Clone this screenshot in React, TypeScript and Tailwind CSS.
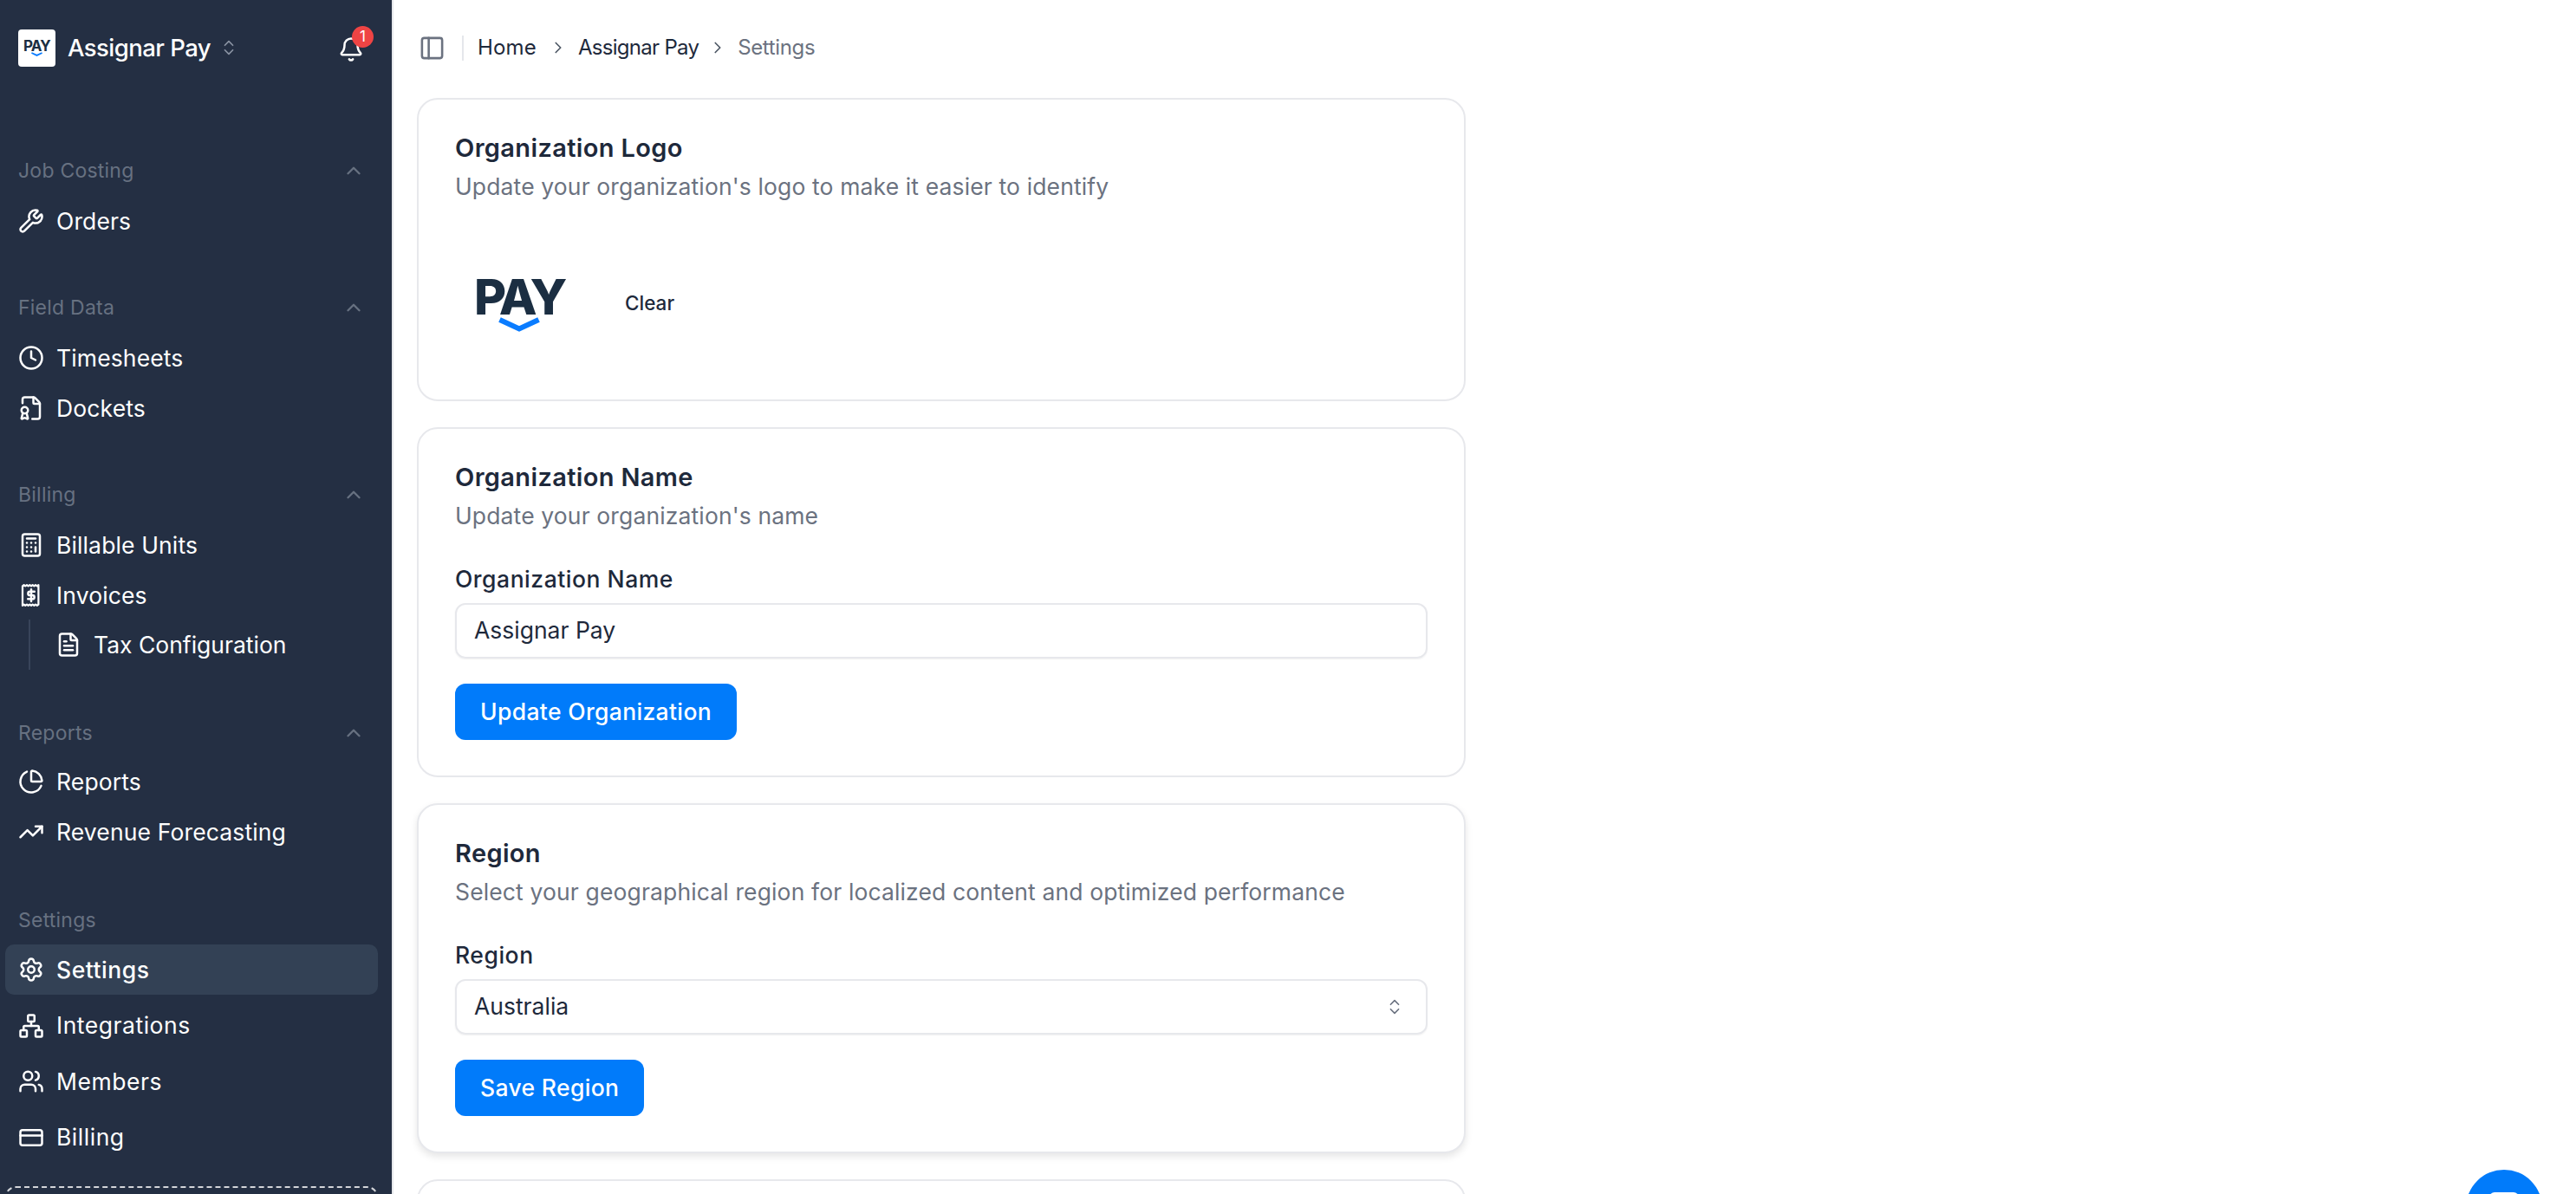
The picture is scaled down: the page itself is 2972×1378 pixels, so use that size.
import {
  Bell,
  Calculator,
  ChevronRight,
  ChevronsUpDown,
  ChevronUp,
  ChartPie,
  Clock,
  CreditCard,
  FileBadge,
  FileText,
  Network,
  PanelLeft,
  Settings,
  TrendingUp,
  Users,
  Wrench,
} from "lucide-react";

const PayMark = ({ big }: { big?: boolean }) => {
  if (big) {
    return (
      <div className="flex flex-col items-center">
        <span className="[font-family:Inter,sans-serif] text-[57px] leading-[41px] h-[41px] font-extrabold tracking-[-0.06em] text-[#1b2e42]">
          PAY
        </span>
        <svg viewBox="0 0 48 17" className="w-[48px] h-[17px] mt-[3px]">
          <polyline points="1.5,3 24,13.5 46.5,3" fill="none" stroke="#0a7cff" strokeWidth="6" />
        </svg>
      </div>
    );
  }
  return (
    <div className="flex flex-col items-center">
      <span className="[font-family:Inter,sans-serif] text-[17px] leading-[12px] h-[12px] font-bold tracking-[-0.05em] text-[#1b2e42]">
        PAY
      </span>
      <svg viewBox="0 0 48 17" className="w-[13px] h-[5px] mt-[1px]">
        <polyline points="1.5,3 24,13.5 46.5,3" fill="none" stroke="#0a7cff" strokeWidth="7" />
      </svg>
    </div>
  );
};

const ReceiptDollar = () => (
  <svg
    viewBox="0 0 24 24"
    className="w-[30px] h-[30px]"
    fill="none"
    stroke="currentColor"
    strokeWidth="2"
    strokeLinejoin="round"
    strokeLinecap="round"
  >
    <path
      d="M4 3.5l1.3-1 1.3 1 1.4-1 1.3 1 1.4-1 1.3 1 1.3-1 1.4 1 1.3-1 1.4 1 1.3-1V3.5v17l-1.3 1-1.4-1-1.3 1-1.4-1-1.3 1-1.3-1-1.4 1-1.3-1-1.4 1-1.3-1-1.3 1z"
      strokeWidth="1.8"
    />
    <path d="M12 6.5v11M15 8.6h-4.2a1.7 1.7 0 0 0 0 3.4h2.4a1.7 1.7 0 0 1 0 3.4H9" />
  </svg>
);

const Item = ({
  icon,
  label,
  active,
  tracking = "tracking-[0.005em]",
}: {
  icon: React.ReactNode;
  label: string;
  active?: boolean;
  tracking?: string;
}) => (
  <div
    className={`flex items-center h-[58px] ml-[6px] mr-[16px] pl-[15px] rounded-[10px] gap-[14px] text-white ${
      active ? "bg-[#334155] font-medium" : ""
    }`}
  >
    <span className="w-[30px] h-[30px] shrink-0 flex items-center justify-center">{icon}</span>
    <span className={`text-[26.5px] leading-none whitespace-nowrap ${tracking}`}>{label}</span>
  </div>
);

const GroupLabel = ({ label, chevron = true }: { label: string; chevron?: boolean }) => (
  <div className="flex items-center justify-between h-[58px] pl-[21px] pr-[31px] text-[#677181]">
    <span className="text-[23px] leading-none tracking-[0.01em]">{label}</span>
    {chevron && <ChevronUp size={26} strokeWidth={2.2} />}
  </div>
);

const Card = ({
  title,
  description,
  raised,
  children,
}: {
  title: string;
  description: string;
  raised?: boolean;
  children?: React.ReactNode;
}) => (
  <section
    className={`w-[1210px] shrink-0 rounded-[24px] border-2 border-[#e7e8ec] bg-white pt-[38px] pb-[41px] px-[42px] ${
      raised ? "shadow-[0_4px_8px_rgba(0,0,0,0.1)]" : ""
    }`}
  >
    <h2 className="h-[36px] leading-[36px] text-[29px] font-semibold tracking-[0.012em] text-[#1e293b]">{title}</h2>
    <p className="mt-[7px] h-[38px] leading-[38px] text-[26.5px] tracking-[0.005em] text-[#6b7280] whitespace-nowrap">
      {description}
    </p>
    {children}
  </section>
);

const Field = ({ label, value, select }: { label: string; value: string; select?: boolean }) => (
  <>
    <div className="mt-[36px] h-[36px] leading-[36px] text-[26.5px] font-medium tracking-[0.02em] text-[#1e293b]">
      {label}
    </div>
    <div className="mt-[10px] h-[64px] rounded-[12px] border-2 border-[#e7e8ec] shadow-[0_1px_2px_rgba(0,0,0,0.06)] flex items-center justify-between pl-[20px] pr-[25px]">
      <span className="text-[26.5px] text-[#1e293b]">{value}</span>
      {select && <ChevronsUpDown size={22} strokeWidth={1.8} className="text-[#6b7280]" />}
    </div>
  </>
);

const Button = ({ label }: { label: string }) => (
  <button className="mt-[29px] h-[65px] block rounded-[12px] bg-[#017bfa] px-[29px] text-white text-[26.5px] font-medium tracking-[0.013em]">
    {label}
  </button>
);

export default function App() {
  return (
    <div className="h-screen w-full overflow-hidden flex bg-white [font-family:Inter,sans-serif]">
      <aside className="w-[454px] shrink-0 h-full overflow-hidden bg-[#242f43] border-r-2 border-[#e5e7eb]">
        <div className="h-[168px] pt-[34px] pl-[21px] pr-[32px] flex items-start">
          <div className="w-[43px] h-[43px] rounded-[4px] bg-white flex items-center justify-center">
            <PayMark />
          </div>
          <span className="ml-[14px] h-[43px] flex items-center text-white text-[27.5px] font-medium tracking-[-0.02em]">
            Assignar Pay
          </span>
          <ChevronsUpDown size={22} strokeWidth={1.8} className="ml-[10px] mt-[10px] text-[#8a93a3]" />
          <div className="ml-auto relative mt-[8px]">
            <Bell size={30} strokeWidth={2} className="text-white" />
            <span className="absolute -top-[12px] -right-[11px] w-[25px] h-[25px] rounded-full bg-[#ef4444] text-white text-[17px] flex items-center justify-center">
              1
            </span>
          </div>
        </div>

        <GroupLabel label="Job Costing" />
        <Item icon={<Wrench size={30} strokeWidth={2} />} label="Orders" />

        <div className="mt-[42px]">
          <GroupLabel label="Field Data" />
          <Item icon={<Clock size={30} strokeWidth={2} />} label="Timesheets" />
          <Item icon={<FileBadge size={30} strokeWidth={2} />} label="Dockets" />
        </div>

        <div className="mt-[42px]">
          <GroupLabel label="Billing" />
          <Item icon={<Calculator size={30} strokeWidth={2} />} label="Billable Units" />
          <Item icon={<ReceiptDollar />} label="Invoices" />
          <div className="ml-[33px] pl-[14px] border-l-2 border-[#38445a]">
            <div className="-ml-[6px] -mt-[1px]">
              <Item icon={<FileText size={30} strokeWidth={2} />} label="Tax Configuration" tracking="tracking-normal" />
            </div>
          </div>
        </div>

        <div className="mt-[44px]">
          <GroupLabel label="Reports" />
          <div className="-mt-[2px]">
            <Item icon={<ChartPie size={30} strokeWidth={2} />} label="Reports" />
            <Item icon={<TrendingUp size={30} strokeWidth={2} />} label="Revenue Forecasting" />
          </div>
        </div>

        <div className="mt-[44px]">
          <GroupLabel label="Settings" chevron={false} />
          <div className="flex flex-col gap-[6.5px] -mt-[1px]">
            <Item icon={<Settings size={30} strokeWidth={2} />} label="Settings" active tracking="tracking-[0.02em]" />
            <Item icon={<Network size={30} strokeWidth={2} />} label="Integrations" tracking="tracking-[0.02em]" />
            <Item icon={<Users size={30} strokeWidth={2} />} label="Members" tracking="tracking-[0.02em]" />
            <Item icon={<CreditCard size={30} strokeWidth={2} />} label="Billing" tracking="tracking-[0.02em]" />
          </div>
        </div>

        <div className="mt-[27px] ml-[6px] mr-[16px] h-[60px] rounded-[12px] border-2 border-dashed border-white/80" />
      </aside>

      <main className="flex-1 h-full overflow-hidden pl-[27px]">
        <header className="h-[110px] mb-[3px] pl-[2px] flex items-center text-[#1e293b]">
          <PanelLeft size={31} strokeWidth={2} className="text-[#6b7280]" />
          <span className="w-[2px] h-[29px] bg-[#e5e7eb] ml-[19px] mr-[16px]" />
          <span className="text-[24px] tracking-[0.008em]">Home</span>
          <ChevronRight size={22} strokeWidth={1.8} className="ml-[14px] mr-[12px] text-[#4b5563]" />
          <span className="text-[24px] tracking-[-0.03em]">Assignar Pay</span>
          <ChevronRight size={22} strokeWidth={1.8} className="ml-[11px] mr-[12px] text-[#4b5563]" />
          <span className="text-[24px] tracking-[-0.015em] text-[#6b7280]">Settings</span>
        </header>

        <div className="flex flex-col gap-[30px]">
          <Card title="Organization Logo" description="Update your organization's logo to make it easier to identify">
            <div className="mt-[50px] flex items-center">
              <div className="w-[142px] h-[136px] pl-[6px] flex items-center justify-center">
                <PayMark big />
              </div>
              <span className="ml-[54px] mb-[4px] text-[22.5px] font-medium text-[#1e293b]">Clear</span>
            </div>
          </Card>

          <Card title="Organization Name" description="Update your organization's name">
            <Field label="Organization Name" value="Assignar Pay" />
            <Button label="Update Organization" />
          </Card>

          <Card
            raised
            title="Region"
            description="Select your geographical region for localized content and optimized performance"
          >
            <Field label="Region" value="Australia" select />
            <Button label="Save Region" />
          </Card>

          <section className="w-[1210px] h-[300px] shrink-0 rounded-[24px] border-2 border-[#e7e8ec] bg-white" />
        </div>
      </main>

      <div className="fixed right-[39px] -bottom-[60px] w-[88px] h-[88px] rounded-full bg-[#017bfa] flex items-center justify-center">
        <div className="w-[34px] h-[36px] rounded-[6px] bg-white" />
      </div>
    </div>
  );
}
